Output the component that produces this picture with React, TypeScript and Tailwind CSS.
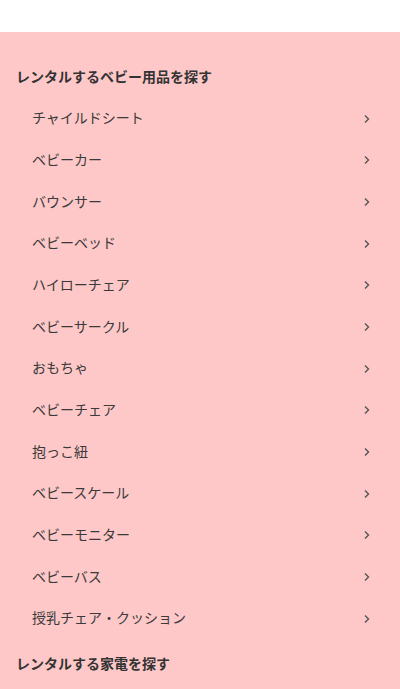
const items = [
  "チャイルドシート",
  "ベビーカー",
  "バウンサー",
  "ベビーベッド",
  "ハイローチェア",
  "ベビーサークル",
  "おもちゃ",
  "ベビーチェア",
  "抱っこ紐",
  "ベビースケール",
  "ベビーモニター",
  "ベビーバス",
  "授乳チェア・クッション",
]

function Chevron() {
  return (
    <svg width="8" height="10" viewBox="0 0 8 10" fill="none" className="shrink-0 translate-y-[1px]">
      <path d="M2 1.5 L5.5 5 L2 8.5" stroke="#555" strokeWidth="1.4" />
    </svg>
  )
}

export default function App() {
  return (
    <div className="w-[400px] h-[689px] overflow-hidden bg-white font-['Noto_Sans_CJK_JP',sans-serif] text-[#333]">
      <div className="h-[32px]" />
      <div className="bg-[#fec8c8] pt-[23px] pb-6">
        {/* baby goods */}
        <div className="h-[42px] flex items-center px-4 text-[14px] font-bold">レンタルするベビー用品を探す</div>
        <ul>
          {items.map((name) => (
            <li key={name} className="h-[41.67px] flex items-center justify-between pl-8 pr-[29px] text-[14px] text-[#3a3a3a]">
              <span>{name}</span>
              <Chevron />
            </li>
          ))}
        </ul>
        {/* appliances */}
        <div className="mt-1 h-[42px] flex items-center px-4 text-[14px] font-bold">レンタルする家電を探す</div>
      </div>
    </div>
  )
}
